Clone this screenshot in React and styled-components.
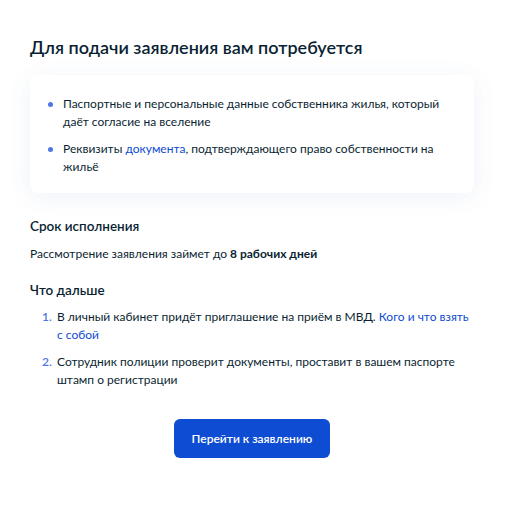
import React from "react";
import styled, { createGlobalStyle } from "styled-components";

const GlobalStyle = createGlobalStyle`
    html, body {
        margin: 0;
        padding: 0;
        background: #ffffff;
    }
    body {
        font-family: Lato, "Noto Sans", sans-serif;
        color: #0b1f33;
        -webkit-font-smoothing: antialiased;
    }
`;

const Page = styled.div`
    width: 506px;
    padding: 35px 32px 0 30px;
    box-sizing: border-box;
`;

const Title = styled.h1`
    margin: 0;
    font-size: 18px;
    line-height: 24px;
    font-weight: 600;
    color: #0b1f33;
`;

const Card = styled.div`
    margin-top: 16px;
    padding: 20px 24px 17px 18px;
    background: #ffffff;
    border-radius: 8px;
    box-shadow: 0 4px 24px rgba(43, 86, 180, 0.08);
`;

const BulletList = styled.ul`
    margin: 0;
    padding: 0;
    list-style: none;
    display: flex;
    flex-direction: column;
    gap: 9px;
`;

const Bullet = styled.li`
    position: relative;
    padding-left: 15px;
    font-size: 12px;
    line-height: 18px;
    &::before {
        content: "";
        position: absolute;
        left: 0;
        top: 7px;
        width: 5px;
        height: 5px;
        border-radius: 50%;
        background: #4f77e3;
    }
`;

const Link = styled.a`
    color: #0d4cd3;
    text-decoration: none;
`;

const Section = styled.section`
    margin-top: ${(p) => p.$top}px;
`;

const Heading = styled.h2`
    margin: 0;
    font-size: 13.5px;
    line-height: 20px;
    font-weight: 600;
`;

const Text = styled.p`
    margin: 9px 0 0;
    font-size: 12px;
    line-height: 18px;
    b {
        font-weight: 700;
    }
`;

const Steps = styled.ol`
    margin: 8px 0 0;
    padding: 0 0 0 12px;
    list-style: none;
    display: flex;
    flex-direction: column;
    gap: 9px;
`;

const Step = styled.li`
    display: flex;
    font-size: 12px;
    line-height: 18px;
`;

const StepNum = styled.span`
    flex: 0 0 15px;
    color: #4f77e3;
    font-weight: 600;
`;

const Actions = styled.div`
    display: flex;
    justify-content: center;
    margin-top: 30px;
`;

const Button = styled.button`
    height: 39px;
    width: 156px;
    padding: 0;
    border: none;
    border-radius: 6px;
    background: #0d4cd3;
    color: #ffffff;
    font-family: inherit;
    font-size: 12px;
    font-weight: 600;
    cursor: pointer;
`;

const requirements = [
    <>Паспортные и персональные данные собственника жилья, который даёт согласие на вселение</>,
    <>Реквизиты <Link href="#">документа</Link>, подтверждающего право собственности на жильё</>,
];

const steps = [
    <>В личный кабинет придёт приглашение на приём в МВД. <Link href="#">Кого и что взять с собой</Link></>,
    <>Сотрудник полиции проверит документы, проставит в вашем паспорте штамп о регистрации</>,
];

export default function App() {
    return (
        <>
            <GlobalStyle />
            <Page>
                <Title>Для подачи заявления вам потребуется</Title>
                <Card>
                    <BulletList>
                        {requirements.map((item, i) => (
                            <Bullet key={i}>{item}</Bullet>
                        ))}
                    </BulletList>
                </Card>
                <Section $top={23}>
                    <Heading>Срок исполнения</Heading>
                    <Text>
                        Рассмотрение заявления займет до <b>8 рабочих дней</b>
                    </Text>
                </Section>
                <Section $top={17}>
                    <Heading>Что дальше</Heading>
                    <Steps>
                        {steps.map((item, i) => (
                            <Step key={i}>
                                <StepNum>{i + 1}.</StepNum>
                                <span>{item}</span>
                            </Step>
                        ))}
                    </Steps>
                </Section>
                <Actions>
                    <Button>Перейти к заявлению</Button>
                </Actions>
            </Page>
        </>
    );
}
